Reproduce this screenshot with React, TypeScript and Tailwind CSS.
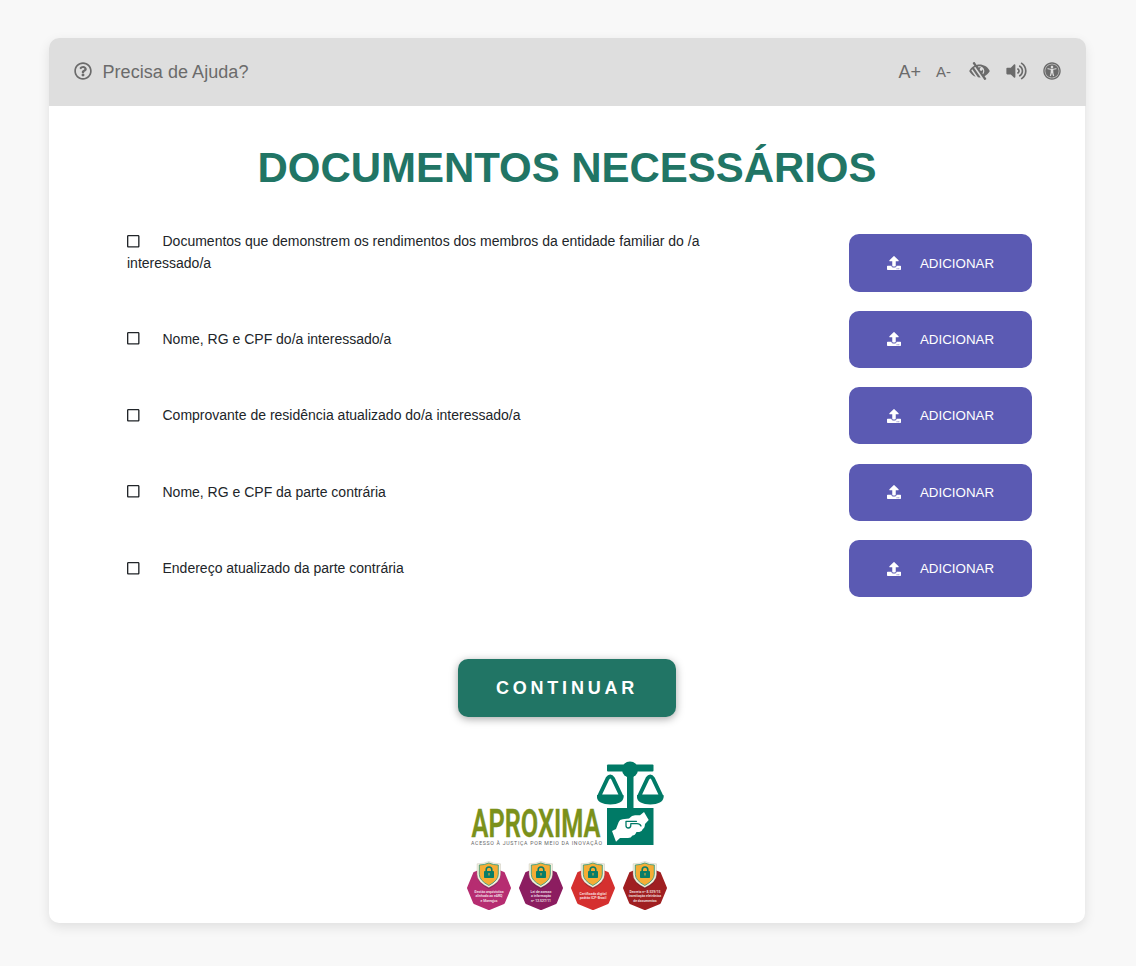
import React from "react";
import {
  FaRegQuestionCircle,
  FaLowVision,
  FaVolumeUp,
  FaUniversalAccess,
  FaUpload,
  FaRegSquare,
} from "react-icons/fa";

const documents = [
  "Documentos que demonstrem os rendimentos dos membros da entidade familiar do /a interessado/a",
  "Nome, RG e CPF do/a interessado/a",
  "Comprovante de residência atualizado do/a interessado/a",
  "Nome, RG e CPF da parte contrária",
  "Endereço atualizado da parte contrária",
];

const seals = [
  { color: "#b62d71", lines: ["Gestão arquivística", "alinhada ao eARQ", "e Moreqjus"] },
  { color: "#8c1d60", lines: ["Lei de acesso", "a informação", "nº 12.527/11"] },
  { color: "#d5302f", lines: ["Certificado digital", "padrão ICP-Brasil"] },
  { color: "#a01f21", lines: ["Decreto nº 8.539/15", "tramitação eletrônica", "de documentos"] },
];

function Header() {
  return (
    <header className="-mr-px flex h-[68px] items-center justify-between rounded-t-[10px] bg-[#dedede] pl-[24.5px] pr-[25px] text-[18px] text-[#6b6b6b]">
      <div className="flex items-center gap-[11px]">
        <FaRegQuestionCircle className="-mt-[2px] size-[18px]" />
        <span className="tracking-[0.05px]">Precisa de Ajuda?</span>
      </div>
      <div className="flex items-center">
        <span className="-ml-px">A+</span>
        <span className="ml-[15px] mt-px text-[15px]">A-</span>
        <FaLowVision className="-mt-[2px] ml-[18px] h-[18px] w-[21px]" />
        <FaVolumeUp className="-mt-[2px] ml-[16px] h-[18px] w-[21px]" />
        <FaUniversalAccess className="-mt-[2px] ml-[16px] size-[18px]" />
      </div>
    </header>
  );
}

function Logo() {
  return (
    <svg className="h-[88px] w-[196px]" viewBox="470 760 196 88" role="img" aria-label="Aproxima">
      <text x="471.5" y="836.5" fontFamily="Roboto" fontWeight="600" fontSize="38" textLength="129" lengthAdjust="spacingAndGlyphs" fill="#7b911b" stroke="#7b911b" strokeWidth=".4">
        APROXIMA
      </text>
      <text x="471" y="845" fontFamily="Roboto" fontSize="5.2" textLength="131" lengthAdjust="spacing" fill="#666">
        ACESSO À JUSTIÇA POR MEIO DA INOVAÇÃO
      </text>
      <g fill="#007a66">
        <rect x="607" y="764.5" width="46.5" height="7" rx="1" />
        <circle cx="630" cy="769.5" r="8" />
        <rect x="627" y="769" width="6.5" height="40" />
        <rect x="607" y="808" width="46.5" height="37" />
        <path d="M597 795h26.5v2c0 4.7-5.5 7.5-13.2 7.5s-13.3-2.8-13.3-7.5Z" />
        <path d="M637 795h26.5v2c0 4.7-5.5 7.5-13.2 7.5s-13.3-2.8-13.3-7.5Z" />
      </g>
      <g fill="none" stroke="#007a66" strokeWidth="4" strokeLinejoin="round">
        <path d="M599 796.5 607.5 778.5Q610.3 774.5 613 778.5L621.5 796.5Z" />
        <path d="M639 796.5 647.5 778.5Q650.3 774.5 653 778.5L661.5 796.5Z" />
      </g>
      <path d="M612 831 616 829 618.7 822Q619.5 819.5 622.7 819.3L629 818.5Q632 815.3 635 815.3H640L644 812 648.7 820 645 824Q644.8 828 643 828.7 642 831.5 639.3 832H636.5Q635 835.5 632.5 835.5 631 838 628 838H620L616 841.7Z" fill="#fff" />
      <path d="M636.5 821.3H626V825.500Q626 828 628.300 828 630.800 828 630.800 825.300V823.700H637Q640 823.700 641 826" fill="none" stroke="#007a66" strokeWidth="1.300" strokeLinecap="round" strokeLinejoin="round" />
    </svg>
  );
}

function Seal({ color, lines }: { color: string; lines: string[] }) {
  const firstLine = lines.length === 3 ? 31.5 : 33.5;
  return (
    <svg className="h-[50px] w-[46px]" viewBox="0 0 46 50">
      <path
        d="M23 6.5 37.5 12.5 43.500 27 37.500 41.500 23 47.500 8.500 41.500 2.500 27 8.500 12.500Z"
        fill={color}
        stroke={color}
        strokeWidth="3"
        strokeLinejoin="round"
      />
      <path d="M11 12V14.5Q11.5 22.5 22.8 28.3 34.1 22.5 34.8 14.5V12Z" fill="#3b102c" opacity=".3" />
      <path d="M22.8.4q5 2.4 11.7 2.4v10.7q0 7.500-11.700 13Q11.100 21 11.100 13.500V2.800Q17.800 2.800 22.800.4Z" fill="#f5f1dd" stroke="#aaa69c" strokeWidth=".3" />
      <path d="M22.800 2q4.500 2 9.500 2v9.300q0 6.200-9.500 11.200-9.500-5-9.500-11.200V4Q18.300 4 22.800 2Z" fill="#f5ad35" stroke="#28957b" strokeWidth=".8" />
      <rect x="18" y="10" width="10" height="7" rx=".8" fill="#087d68" />
      <path d="M20.200 10.500V8.700q0-2.700 2.800-2.700t2.800 2.700v1.800" fill="none" stroke="#087d68" strokeWidth="1.600" />
      <path d="M23 12v2.500" stroke="#d8a63c" strokeWidth="1.200" />
      <text textAnchor="middle" fontFamily="Roboto" fontWeight="600" fontSize="3.400" fill="#fff" opacity=".85">
        {lines.map((line, index) => (
          <tspan key={line} x="23" y={firstLine + index * 4.8}>{line}</tspan>
        ))}
      </text>
    </svg>
  );
}

export default function App() {
  return (
    <div className="min-h-[966px] bg-[#f8f8f8] pl-[49px] pt-[38px] font-['Liberation_Sans',Arial,sans-serif]">
      <main className="h-[885px] w-[1036px] rounded-[10px] bg-white shadow-[0_4px_12px_rgba(0,0,0,0.1)]">
        <Header />
        <h1 className="h-[85px] pt-[38px] text-center text-[42px] font-bold leading-[47px] tracking-[-0.05px] text-[#217565]">DOCUMENTOS NECESSÁRIOS</h1>
        <ul className="mt-[43px] flex flex-col gap-[19.2px] pl-[78px] pr-[53px]">
          {documents.map((label, index) => (
            <li key={label} className={`flex justify-between ${index === 0 ? "h-[57.6px] items-start" : "h-[57.2px] items-center"}`}>
              <p className={`w-[610px] text-[14px] leading-[22px] text-[#212529] ${index === 0 ? "-mt-[4px]" : "-mt-px"}`}>
                <FaRegSquare className="-mt-[3px] mr-[23px] inline h-[14.5px] w-[12.5px] align-middle" />
                {label}
              </p>
              <button className="flex h-full w-[183px] items-center justify-center gap-[19px] rounded-[10px] bg-[#5b5ab3] text-[13.333px] text-white">
                <FaUpload className="size-[14px]" />
                <span className={index === 0 ? "pt-[2px]" : "pt-px"}>ADICIONAR</span>
              </button>
            </li>
          ))}
        </ul>
        <div className="mt-[61.8px] flex justify-center">
          <button className="h-[58px] w-[218px] rounded-[10px] bg-[#217565] pt-px text-[18px] font-bold tracking-[3.8px] text-white shadow-[0_2px_8px_rgba(0,0,0,0.35)]">
            CONTINUAR
          </button>
        </div>
        <div className="mt-[43px] flex justify-center pl-[2px]">
          <Logo />
        </div>
        <div className="mt-[13px] flex justify-center gap-[6px]">
          {seals.map((seal) => (
            <Seal key={seal.color} {...seal} />
          ))}
        </div>
      </main>
    </div>
  );
}
